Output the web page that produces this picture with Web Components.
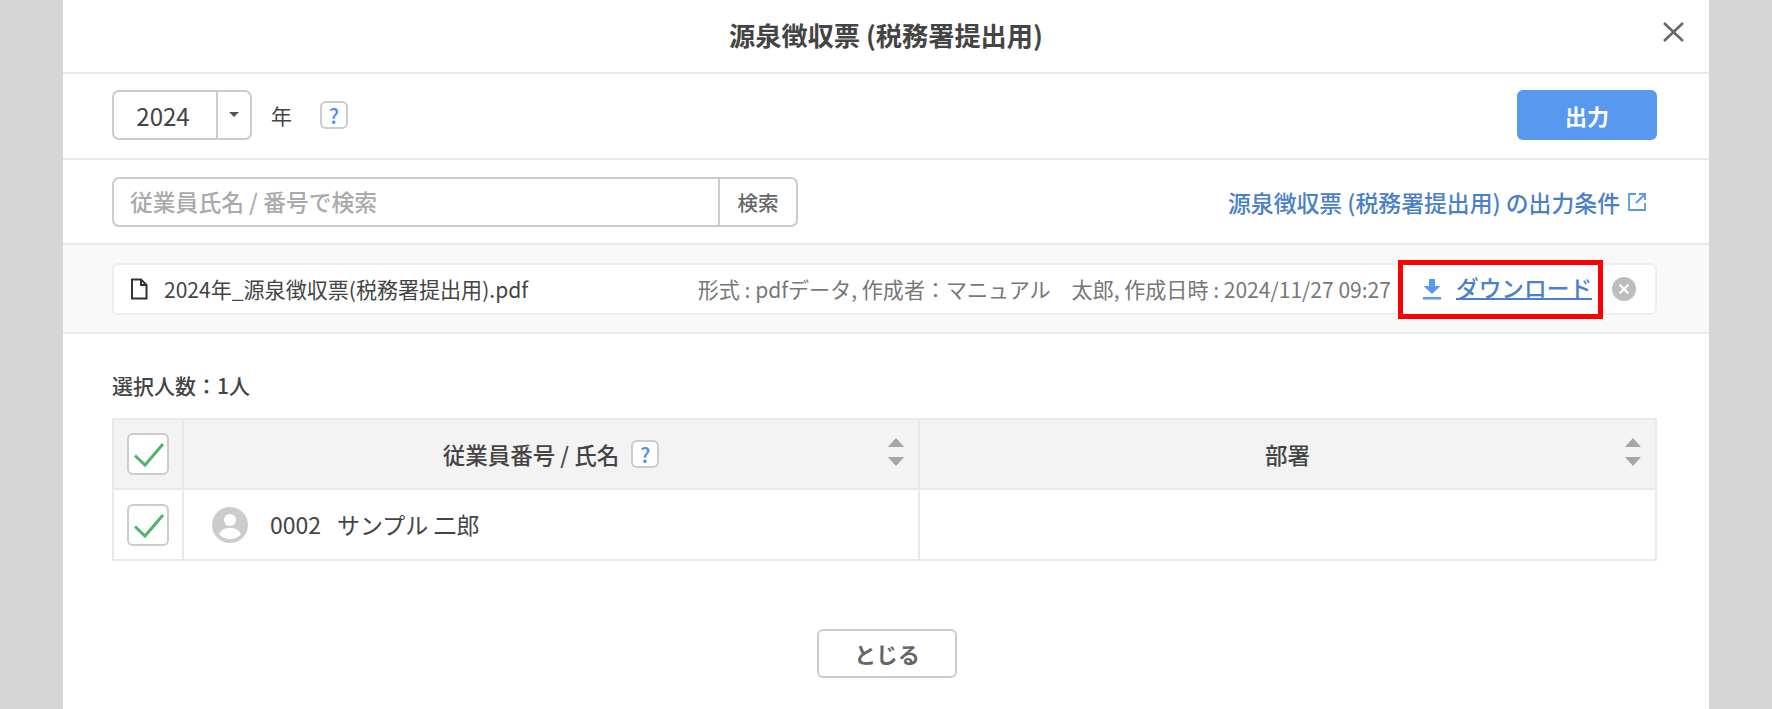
<!DOCTYPE html>
<html lang="ja"><head><meta charset="utf-8"><title>源泉徴収票</title>
<style>
html,body{margin:0;height:709px;overflow:hidden;background:#d6d6d6}
body{font-family:"Noto Sans CJK JP","Noto Sans",sans-serif;font-size:20px;color:#444}
</style></head><body>
<tax-dialog>
  <dialog-header slot="header">源泉徴収票 (税務署提出用)</dialog-header>
  <year-bar slot="year"></year-bar>
  <search-bar slot="search"></search-bar>
  <file-row slot="file" name="2024年_源泉徴収票(税務署提出用).pdf" meta="形式 : pdfデータ, 作成者：マニュアル　太郎, 作成日時 : 2024/11/27 09:27"></file-row>
  <employee-table slot="table"></employee-table>
  <plain-button slot="footer">とじる</plain-button>
</tax-dialog>
<script>
function el(name, html){
  customElements.define(name, class extends HTMLElement{
    constructor(){super();const r=this.attachShadow({mode:'open'});
      r.innerHTML=typeof html==='function'?html(this):html;}
    connectedCallback(){ if(typeof html==='function'){this.shadowRoot.innerHTML=html(this);} }
  });
}
el('tax-dialog',`<style>
:host{display:flex;flex-direction:column;width:1646px;height:709px;margin:0 auto;background:#fff;overflow:hidden}
.body{padding:36px 52px 0 49px}
.count{height:30px;line-height:30px;font-size:21px;font-weight:500;color:#444;margin-bottom:18px}
.foot{display:flex;justify-content:center;margin-top:68px;padding-left:5px}
</style>
<slot name="header"></slot><slot name="year"></slot><slot name="search"></slot><slot name="file"></slot>
<div class="body"><div class="count">選択人数：1人</div><slot name="table"></slot>
<div class="foot"><slot name="footer"></slot></div></div>`);

el('dialog-header',`<style>
:host{display:flex;align-items:center;justify-content:center;position:relative;height:74px;box-sizing:border-box;border-bottom:2px solid #e9e9e9;font-size:26.2px;font-weight:700;color:#444;padding-bottom:3px}
svg{position:absolute;left:1600px;top:22px}
</style><slot></slot>
<svg width="21" height="20" viewBox="0 0 21 20"><path d="M1 1 20 19M20 1 1 19" stroke="#666" stroke-width="2.5" fill="none"/></svg>`);

el('help-badge',`<style>
:host{display:inline-flex;align-items:center;justify-content:center;box-sizing:border-box;width:28px;height:28px;border:2px solid #ccc;border-radius:6px;background:#fff;color:#4a90e8;font-size:21px;font-weight:500;line-height:1}
</style>?`);

el('year-bar',`<style>
:host{display:flex;align-items:center;box-sizing:border-box;height:86px;padding:16px 52px 18px 49px;border-bottom:2px solid #e9e9e9}
.sel{display:flex;box-sizing:border-box;width:140px;height:50px;border:2px solid #ccc;border-radius:7px;background:#fff}
.v{width:104px;box-sizing:border-box;padding-right:4px;border-right:2px solid #ccc;display:flex;align-items:center;justify-content:center;font-size:24px;color:#444}
.a{flex:1;display:flex;align-items:center;justify-content:center}
.a i{width:0;height:0;border:5px solid transparent;border-top:5px solid #555;border-bottom:0;margin-bottom:1px}
.y{margin-left:19px;font-size:21px;color:#444;margin-right:28px}
.sp{flex:1}
.out{width:140px;height:50px;border-radius:6px;background:#5898ee;color:#fff;font-weight:700;font-size:22px;display:flex;align-items:center;justify-content:center}
</style><div class="sel"><div class="v">2024</div><div class="a"><i></i></div></div><span class="y">年</span><help-badge></help-badge><span class="sp"></span><div class="out">出力</div>`);

el('search-bar',`<style>
:host{display:flex;align-items:center;box-sizing:border-box;height:85px;padding:17px 52px 17px 49px;border-bottom:2px solid #e9e9e9}
.in{box-sizing:border-box;width:606px;height:50px;border:2px solid #ccc;border-right:0;border-radius:7px 0 0 7px;padding-left:16px;display:flex;align-items:center;color:#aaa;font-size:22.8px;font-weight:500}
.btn{box-sizing:border-box;width:80px;height:50px;border:2px solid #ccc;border-radius:0 7px 7px 0;display:flex;align-items:center;justify-content:center;font-size:20.5px;font-weight:500;color:#666}
.sp{flex:1}
.lnk{display:flex;align-items:center;gap:7px;color:#4a80c8;font-size:22.85px;font-weight:500;margin-right:10px}
svg{display:block}
</style><div class="in">従業員氏名 / 番号で検索</div><div class="btn">検索</div><span class="sp"></span>
<span class="lnk"><span>源泉徴収票 (税務署提出用) の出力条件</span><svg width="20" height="20" viewBox="0 0 20 20" fill="none" stroke="#5898ee" stroke-width="1.8"><path d="M9 2H2V18H18V11M12 2H18V8M18 2 9 11"/></svg></span>`);

el('file-row',h=>`<style>
:host{display:block;box-sizing:border-box;height:89px;padding:18px 52px 17px 49px;background:#f9f9f9;border-bottom:2px solid #e9e9e9}
.card{display:flex;align-items:center;height:52px;box-sizing:border-box;border:2px solid #eee;border-radius:6px;background:#fff;padding-left:16px}
.ico{margin-right:16px;display:block;flex:none}
.name{font-size:21.05px;color:#444;white-space:nowrap}
.sp{flex:1}
.meta{font-size:21.05px;color:#777;white-space:nowrap;margin-right:7px}
.red{box-sizing:border-box;width:205px;height:59px;border:5px solid #f00;background:#fff;display:flex;align-items:center;padding-left:20px;flex:none}
.dl{display:flex;align-items:center;gap:15px}
.dl u{color:#4a80c8;font-size:22.7px;font-weight:500;text-underline-offset:1px;text-decoration-thickness:1.5px;position:relative;top:-2px}
.x{margin:0 19px 0 9px;display:block;flex:none}
</style><div class="card">
<svg class="ico" width="18" height="22" viewBox="0 0 18 22" fill="none" stroke="#333" stroke-width="2"><path d="M2 1.5H11L16.5 7V20.5H2ZM11 1.5V7H16.5"/></svg>
<span class="name">${h.getAttribute('name')||''}</span><span class="sp"></span>
<span class="meta">${h.getAttribute('meta')||''}</span>
<div class="red"><span class="dl"><svg width="18" height="22" viewBox="0 0 18 22"><path d="M6 1H12V8H17.5L9 16 .5 8H6ZM0 19H18V21.5H0Z" fill="#5898ee"/></svg><u>ダウンロード</u></span></div>
<svg class="x" width="24" height="24" viewBox="0 0 24 24"><circle cx="12" cy="12" r="12" fill="#bdbdbd"/><path d="M7.5 7.5 16.5 16.5M16.5 7.5 7.5 16.5" stroke="#fff" stroke-width="2.2"/></svg>
</div>`);

el('check-box',`<style>
:host{display:block;box-sizing:border-box;width:42px;height:42px;border:2px solid #ccc;border-radius:6px;background:#fff}
svg{display:block;margin:7px 0 0 4px}
</style><svg width="32" height="26" viewBox="0 0 32 26" fill="none"><path d="M2 13.5 12 23 30 2" stroke="#4fb56a" stroke-width="3"/></svg>`);

el('sort-arrows',`<style>
:host{display:flex;flex-direction:column;gap:10px;position:absolute;right:14px;top:18px}
i{width:0;height:0;border-left:8.5px solid transparent;border-right:8.5px solid transparent;display:block}
.u{border-bottom:9px solid #a6a6a6}.d{border-top:9px solid #a6a6a6}
</style><i class="u"></i><i class="d"></i>`);

el('user-avatar',`<style>:host{display:block;width:36px;height:36px}svg{display:block}</style>
<svg width="36" height="36" viewBox="0 0 36 36"><circle cx="18" cy="18" r="18" fill="#ccc"/><circle cx="18" cy="13" r="6" fill="#fff"/><path d="M7 27.5C9 22 14 21 18 21S27 22 29 27.5C26 30.5 22 32 18 32S10 30.5 7 27.5Z" fill="#fff"/></svg>`);

el('employee-table',`<style>
:host{display:grid;grid-template-columns:70px 736px 1fr;grid-template-rows:70px 69px;box-sizing:border-box;width:1545px;border:2px solid #e9e9e9;font-size:23px;color:#444}
.c{box-sizing:border-box;display:flex;align-items:center;justify-content:center;position:relative;border-right:2px solid #e9e9e9}
.c.last{border-right:0}
.h{background:#f3f3f3;border-bottom:2px solid #e9e9e9;font-weight:500;font-size:22.5px}
.h help-badge{margin-left:12px}
.row{justify-content:flex-start;padding-left:28px}
.row user-avatar{margin-right:22px}
.row span{position:relative;top:-1px}
.no{margin-right:16px}
</style>
<div class="c h"><check-box></check-box></div>
<div class="c h"><span>従業員番号 / 氏名</span><help-badge></help-badge><sort-arrows></sort-arrows></div>
<div class="c h last"><span>部署</span><sort-arrows></sort-arrows></div>
<div class="c"><check-box></check-box></div>
<div class="c row"><user-avatar></user-avatar><span class="no">0002</span><span>サンプル 二郎</span></div>
<div class="c last"></div>`);

el('plain-button',`<style>
:host{display:flex;align-items:center;justify-content:center;box-sizing:border-box;width:140px;height:49px;border:2px solid #ccc;border-radius:6px;background:#fff;color:#666;font-size:21.8px;font-weight:700}
</style><slot></slot>`);
</script>
</body></html>
